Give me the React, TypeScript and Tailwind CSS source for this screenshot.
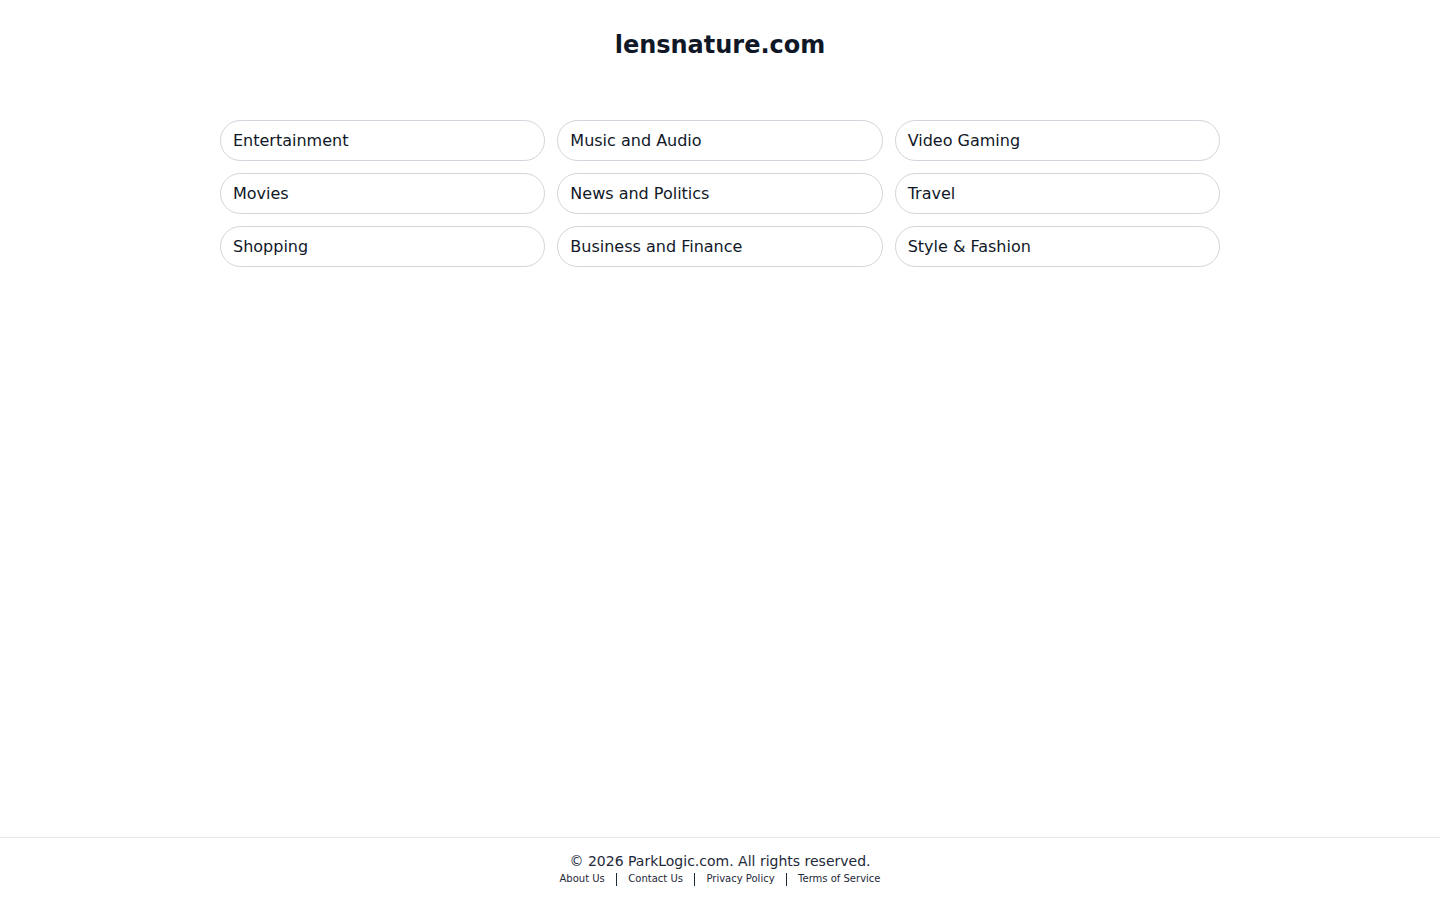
const categories: string[] = [
    "Entertainment",
    "Music and Audio",
    "Video Gaming",
    "Movies",
    "News and Politics",
    "Travel",
    "Shopping",
    "Business and Finance",
    "Style & Fashion",
]

const footerLinks: string[] = ["About Us", "Contact Us", "Privacy Policy", "Terms of Service"]

function CategoryGrid() {
    return (
        <div className="w-[1000px] mx-auto grid grid-cols-3 gap-x-3 gap-y-3">
            {categories.map(item => (
                <a key={item} href="#"
                   className="flex items-center h-[41px] rounded-full border border-gray-300 bg-white px-3 text-base leading-6 text-gray-900 hover:border-gray-400">
                    {item}
                </a>
            ))}
        </div>
    )
}

function Footer() {
    return (
        <footer className="border-t border-gray-200 pt-[13px] pb-[14px] text-center">
            <p className="text-sm leading-5 text-gray-800">© 2026 ParkLogic.com. All rights reserved.</p>
            <div className="flex justify-center items-center pt-px text-[10px] leading-[14px] text-gray-800">
                {footerLinks.map((link, i) => (
                    <div key={link} className="flex items-center">
                        {i > 0 && <span className="inline-block w-[1.5px] h-[13px] bg-gray-800 mx-[11px]"/>}
                        <a href="#" className="hover:underline">{link}</a>
                    </div>
                ))}
            </div>
        </footer>
    )
}

export default function App() {
    return (
        <div className="min-h-screen flex flex-col bg-white"
             style={{fontFamily: '"DejaVu Sans", "Liberation Sans", sans-serif'}}>
            <main className="flex-1">
                <h1 className="pt-[29px] pb-[59px] text-center text-2xl leading-8 font-bold text-gray-900">
                    lensnature.com
                </h1>
                <CategoryGrid/>
            </main>
            <Footer/>
        </div>
    )
}
